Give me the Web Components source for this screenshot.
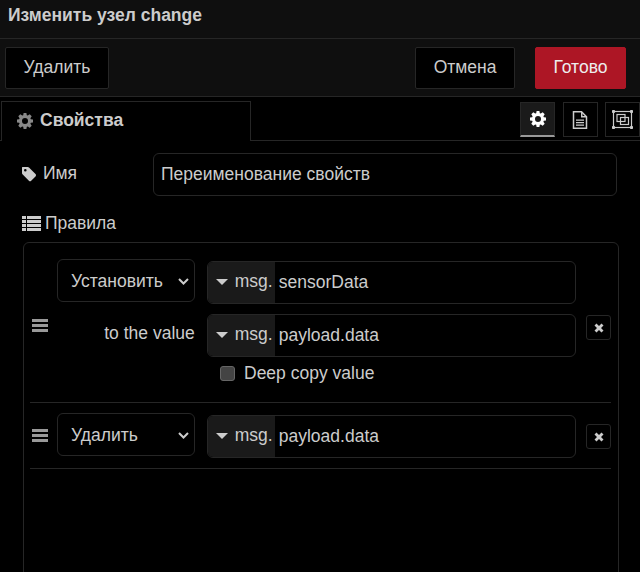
<!DOCTYPE html>
<html>
<head>
<meta charset="utf-8">
<style>
    html, body {
        margin: 0;
        height: 572px;
        overflow: hidden;
        background: #000;
        color: #ccc;
        font-family: "Liberation Sans", Arial, sans-serif;
        font-size: 17.5px;
    }
</style>
</head>
<body>
<edit-dialog heading="Изменить узел change">
    <rule-row slot="rules" action="Установить" field="sensorData" value="payload.data"></rule-row>
    <rule-row slot="rules" action="Удалить" field="payload.data"></rule-row>
</edit-dialog>

<script>
const ICONS = {
    gear: `<svg width="16" height="16" viewBox="0 0 16 16"><path fill="currentColor" fill-rule="evenodd" d="M6.6 0h2.8l.4 2.2 1 .4L12.700 1.300l2 2-1.300 1.900.4 1L16 6.600v2.800l-2.200.4-.4 1 1.300 1.900-2 2-1.900-1.300-1 .4L9.400 16H6.600l-.4-2.200-1-.4-1.900 1.300-2-2 1.300-1.900-.4-1L0 9.400V6.600l2.200-.4.400-1L1.300 3.300l2-2 1.900 1.300 1-.4zM8 5a3 3 0 1 0 0 6 3 3 0 0 0 0-6z"/></svg>`,
    file: `<svg width="16" height="18" viewBox="0 0 16 18"><path fill="none" stroke="currentColor" stroke-width="1.500" d="M1.500.8h8l5 5v11.400h-13z"/><path fill="currentColor" d="M9 1h1.500v4H15v1.500H9zM4 8.500h8v1.300H4zM4 11h8v1.300H4zM4 13.500h8v1.300H4z"/></svg>`,
    frame: `<svg width="21" height="19" viewBox="0 0 21 19"><g fill="none" stroke="currentColor" stroke-width="1.200"><rect x="1.500" y="1.500" width="18" height="16"/><rect x="5" y="4.500" width="8" height="7"/><rect x="8.500" y="7.500" width="8" height="7"/></g><g fill="currentColor"><rect x="0" y="0" width="3" height="3" rx=".8"/><rect x="18" y="0" width="3" height="3" rx=".8"/><rect x="0" y="16" width="3" height="3" rx=".8"/><rect x="18" y="16" width="3" height="3" rx=".8"/></g></svg>`,
    tag: `<svg width="16" height="16" viewBox="0 0 16 16"><path fill="currentColor" fill-rule="evenodd" d="M1.500 1h5.200c.5 0 1 .2 1.300.5l6.500 6.600c.7.700.7 1.600 0 2.300l-4.300 4.300c-.7.700-1.600.7-2.300 0L1.500 8.200C1.200 7.900 1 7.400 1 7V1.500c0-.3.200-.5.500-.5zM4.300 3a1.300 1.300 0 1 0 0 2.600 1.300 1.300 0 0 0 0-2.600z"/></svg>`,
    list: `<svg width="19" height="15" viewBox="0 0 19 15"><path fill="currentColor" d="M0 0h4v3H0zM5 0h14v3H5zM0 4h4v3H0zM5 4h14v3H5zM0 8h4v3H0zM5 8h14v3H5zM0 12h4v3H0zM5 12h14v3H5z"/></svg>`,
    bars: `<svg width="16" height="13" viewBox="0 0 16 13"><path fill="currentColor" d="M0 0h16v3H0zM0 5h16v3H0zM0 10h16v3H0z"/></svg>`,
    cross: `<svg width="10" height="10" viewBox="0 0 10 10"><path fill="currentColor" d="M2.500.5 5 3l2.500-2.500 2 2L7 5l2.500 2.500-2 2L5 7 2.500 9.500l-2-2L3 5 .5 2.500z"/></svg>`,
};

class NrButton extends HTMLElement {
    constructor() {
        super();
        this.attachShadow({mode: "open"}).innerHTML = `
            <style>
                :host {
                    display: flex;
                    align-items: center;
                    justify-content: center;
                    box-sizing: border-box;
                    height: 42px;
                    padding: 0 17.500px 2px;
                    background: #000;
                    border: 1px solid #262626;
                    border-radius: 2px;
                    color: #ccc;
                }
                :host([primary]) {
                    background: #ad1625;
                    border-color: #ad1625;
                    color: #eee;
                }
            </style>
            <slot></slot>
        `;
    }
}
customElements.define("nr-button", NrButton);

class TypedInput extends HTMLElement {
    constructor() {
        super();
        this.attachShadow({mode: "open"}).innerHTML = `
            <style>
                :host {
                    display: flex;
                    box-sizing: border-box;
                    width: 370px;
                    height: 43px;
                    border: 1px solid #262626;
                    border-radius: 6px;
                    overflow: hidden;
                    color: #ccc;
                }
                #type {
                    display: flex;
                    align-items: center;
                    width: 67px;
                    padding: 0 0 3px 8px;
                    box-sizing: border-box;
                    background: #1a1a1a;
                    flex: none;
                }
                #caret {
                    width: 0;
                    height: 0;
                    border: 6px solid transparent;
                    border-top: 6px solid #ccc;
                    border-bottom: 0;
                    margin-right: 7px;
                    margin-top: 1px;
                }
                #value {
                    display: flex;
                    align-items: center;
                    padding-left: 4px;
                }
            </style>
            <div id="type"><div id="caret"></div><span>msg.</span></div>
            <div id="value"><slot></slot></div>
        `;
    }
}
customElements.define("typed-input", TypedInput);

class RuleRow extends HTMLElement {
    constructor() {
        super();
        const action = this.getAttribute("action");
        const field = this.getAttribute("field");
        const value = this.getAttribute("value");
        const extra = value ? `
            <div class="line second">
                <div class="label">to the value</div>
                <typed-input>${value}</typed-input>
            </div>
            <label id="deep"><span id="check"></span>Deep copy value</label>
        ` : "";
        this.attachShadow({mode: "open"}).innerHTML = `
            <style>
                :host {
                    display: flex;
                    align-items: center;
                    box-sizing: border-box;
                    margin: 0 7px 0 6px;
                    padding: 12px 0 10px;
                    border-bottom: 1px solid #262626;
                    color: #ccc;
                }
                :host([value]) {
                    padding-bottom: 8px;
                }
                #handle {
                    display: flex;
                    width: 27px;
                    padding: 0 0 3px 2px;
                    box-sizing: border-box;
                    color: #999;
                    flex: none;
                }
                :host([value]) #handle {
                    padding-bottom: 5px;
                }
                #body {
                    width: 519px;
                    flex: none;
                }
                .line {
                    display: flex;
                    align-items: flex-start;
                    gap: 12px;
                }
                .second {
                    margin-top: 10px;
                }
                #select {
                    display: flex;
                    align-items: center;
                    justify-content: space-between;
                    box-sizing: border-box;
                    width: 138px;
                    height: 43px;
                    margin-top: -2px;
                    padding: 2px 5px 0 13px;
                    border: 1px solid #262626;
                    border-radius: 6px;
                }
                .label {
                    width: 138px;
                    text-align: right;
                    line-height: 38px;
                }
                #deep {
                    display: flex;
                    align-items: center;
                    height: 18px;
                    margin: 7px 0 12px 163px;
                }
                #check {
                    box-sizing: border-box;
                    width: 15px;
                    height: 15px;
                    margin-right: 9px;
                    background: #444;
                    border: 1px solid #666;
                    border-radius: 3px;
                }
                #remove {
                    display: flex;
                    align-items: center;
                    justify-content: center;
                    box-sizing: border-box;
                    width: 25px;
                    height: 25px;
                    margin-left: 10px;
                    border: 1px solid #262626;
                    border-radius: 3px;
                    color: #ccc;
                    flex: none;
                }
            </style>
            <div id="handle">${ICONS.bars}</div>
            <div id="body">
                <div class="line">
                    <div id="select">
                        <span>${action}</span>
                        <svg width="11" height="7" viewBox="0 0 11 7"><path fill="none" stroke="currentColor" stroke-width="2" d="M1 1l4.500 4.500L10 1"/></svg>
                    </div>
                    <typed-input>${field}</typed-input>
                </div>
                ${extra}
            </div>
            <div id="remove">${ICONS.cross}</div>
        `;
    }
}
customElements.define("rule-row", RuleRow);

const dialogTemplate = document.createElement("template");
dialogTemplate.innerHTML = `
    <style>
        :host {
            display: flex;
            flex-direction: column;
            height: 572px;
            overflow: hidden;
        }
        #title, #buttons, #tabs, #form {
            flex: none;
        }
        #title {
            box-sizing: border-box;
            height: 39px;
            padding: 5px 8px 0;
            background: #0f0f0f;
            border-bottom: 1px solid #262626;
            font-weight: bold;
            line-height: 20px;
        }
        #buttons {
            display: flex;
            align-items: flex-start;
            box-sizing: border-box;
            height: 58px;
            padding: 8px 14px 0 5px;
            background: #0f0f0f;
            border-bottom: 1px solid #262626;
        }
        #buttons .gap {
            flex: 1;
        }
        #cancel {
            margin-right: 20px;
        }
        #tabs {
            display: flex;
            align-items: flex-end;
            justify-content: space-between;
            box-sizing: border-box;
            height: 44px;
            padding-left: 1px;
            border-bottom: 1px solid #262626;
        }
        #tab {
            display: flex;
            align-items: center;
            gap: 7px;
            box-sizing: border-box;
            width: 250px;
            height: 40px;
            margin-bottom: -1px;
            padding: 0 0 2px 15px;
            background: #000;
            border: 1px solid #262626;
            border-bottom: 0;
            font-weight: bold;
        }
        #tab svg {
            color: #888;
        }
        #icons {
            display: flex;
            gap: 7.500px;
            align-self: flex-start;
            margin-top: 5px;
        }
        .icon {
            display: flex;
            align-items: center;
            justify-content: center;
            box-sizing: border-box;
            width: 35px;
            height: 35px;
            border: 1px solid #262626;
        }
        .icon.active {
            color: #fff;
            background: #1a1a1a;
            border-bottom: 2px solid #999;
        }
        #form {
            padding: 12px 21px 0 23px;
        }
        #name-row {
            display: flex;
            align-items: center;
        }
        #name-label {
            display: flex;
            align-items: center;
            gap: 6px;
            width: 130px;
            margin-top: -2px;
        }
        #name-label svg {
            margin-left: -2px;
        }
        #name {
            display: flex;
            align-items: center;
            box-sizing: border-box;
            width: 464px;
            height: 43px;
            padding: 0 7px;
            border: 1px solid #262626;
            border-radius: 6px;
        }
        #rules-label {
            display: flex;
            align-items: center;
            gap: 4px;
            height: 20px;
            margin-top: 17px;
        }
        #rules-label svg {
            margin-left: -1px;
        }
        #rules {
            box-sizing: border-box;
            height: 400px;
            margin-top: 9px;
            padding-top: 6px;
            border: 1px solid #262626;
            border-radius: 6px;
        }
    </style>
    <div id="title"></div>
    <div id="buttons">
        <nr-button>Удалить</nr-button>
        <div class="gap"></div>
        <nr-button id="cancel">Отмена</nr-button>
        <nr-button primary>Готово</nr-button>
    </div>
    <div id="tabs">
        <div id="tab">${ICONS.gear}<span>Свойства</span></div>
        <div id="icons">
            <div class="icon active">${ICONS.gear}</div>
            <div class="icon">${ICONS.file}</div>
            <div class="icon">${ICONS.frame}</div>
        </div>
    </div>
    <div id="form">
        <div id="name-row">
            <div id="name-label">${ICONS.tag}<span>Имя</span></div>
            <div id="name">Переименование свойств</div>
        </div>
        <div id="rules-label">${ICONS.list}<span>Правила</span></div>
        <div id="rules"><slot name="rules"></slot></div>
    </div>
`;

class EditDialog extends HTMLElement {
    constructor() {
        super();
        this.attachShadow({mode: "open"}).appendChild(dialogTemplate.content.cloneNode(true));
        this.shadowRoot.getElementById("title").textContent = this.getAttribute("heading");
    }
}
customElements.define("edit-dialog", EditDialog);
</script>
</body>
</html>
